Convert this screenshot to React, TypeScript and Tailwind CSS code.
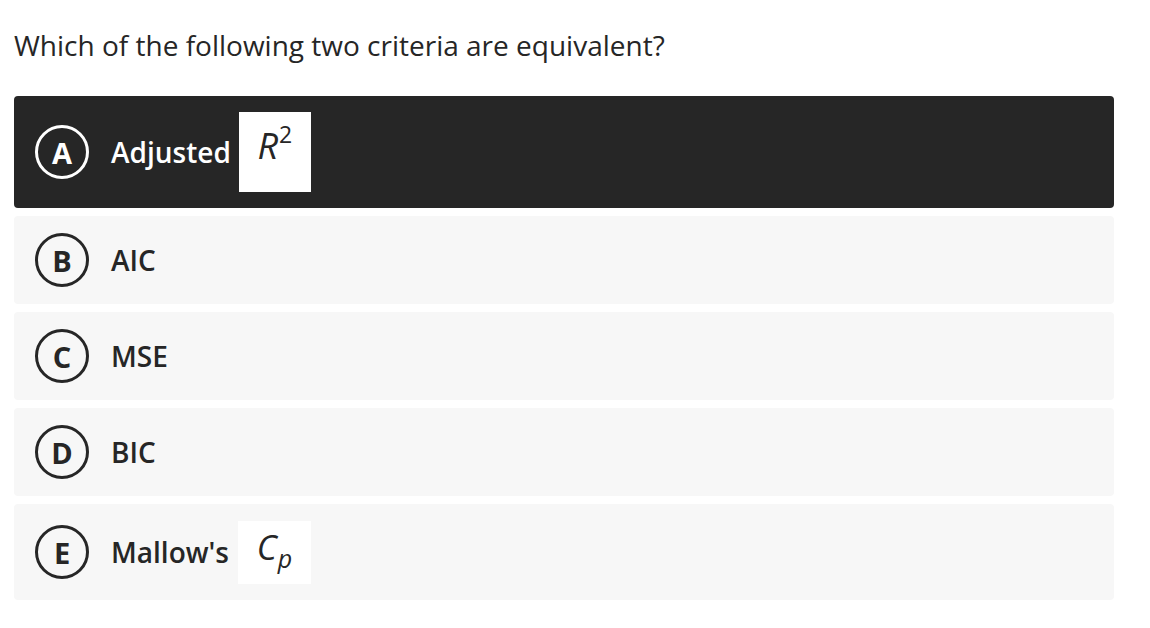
import type { ReactNode } from 'react'

type Option = {
  letter: string
  label: ReactNode
  selected?: boolean
  height: string
}

const options: Option[] = [
  {
    letter: 'A',
    selected: true,
    height: 'h-[112px]',
    label: (
      <>
        <span>Adjusted</span>
        <span className="ml-[8px] flex h-[80px] w-[72px] justify-center bg-white pt-[16px] font-normal text-[#262626]">
          <span className="whitespace-nowrap text-[36px] leading-[36px]">
            <span className="italic">R</span>
            <span className="relative -top-[16px] ml-[1px] text-[23px]">2</span>
          </span>
        </span>
      </>
    ),
  },
  { letter: 'B', label: 'AIC', height: 'h-[88px]' },
  { letter: 'C', label: 'MSE', height: 'h-[88px]' },
  { letter: 'D', label: 'BIC', height: 'h-[88px]' },
  {
    letter: 'E',
    height: 'h-[96px]',
    label: (
      <>
        <span>Mallow's</span>
        <span className="ml-[9px] flex h-[63px] w-[73px] justify-center bg-white pt-[9px] font-normal italic text-[#262626]">
          <span className="whitespace-nowrap text-[34px] leading-[34px]">
            C<span className="relative top-[8px] ml-[1px] text-[25px]">p</span>
          </span>
        </span>
      </>
    ),
  },
]

function OptionRow({ option }: { option: Option }) {
  const dark = option.selected
  return (
    <div
      className={`flex items-center rounded-[4px] pl-[21px] ${option.height} ${
        dark ? 'bg-[#262626] text-white' : 'bg-[#f7f7f7] text-[#262626]'
      }`}
    >
      <span
        className={`flex h-[54px] w-[54px] shrink-0 items-center justify-center rounded-full border-[3px] text-[29px] font-bold leading-none ${
          dark ? 'border-white' : 'border-[#262626]'
        }`}
      >
        {option.letter}
      </span>
      <span className="ml-[22px] flex items-center text-[28px] font-semibold">{option.label}</span>
    </div>
  )
}

export default function App() {
  return (
    <div className="min-h-[628px] bg-white px-[14px] font-['Open_Sans',sans-serif]">
      <div className="w-[1100px]">
        <h1 className="pt-[26px] text-[28px] font-normal leading-[38px] text-[#262626]">
          Which of the following two criteria are equivalent?
        </h1>
        <div className="mt-[32px] flex flex-col gap-[8px]">
          {options.map((option) => (
            <OptionRow key={option.letter} option={option} />
          ))}
        </div>
      </div>
    </div>
  )
}
